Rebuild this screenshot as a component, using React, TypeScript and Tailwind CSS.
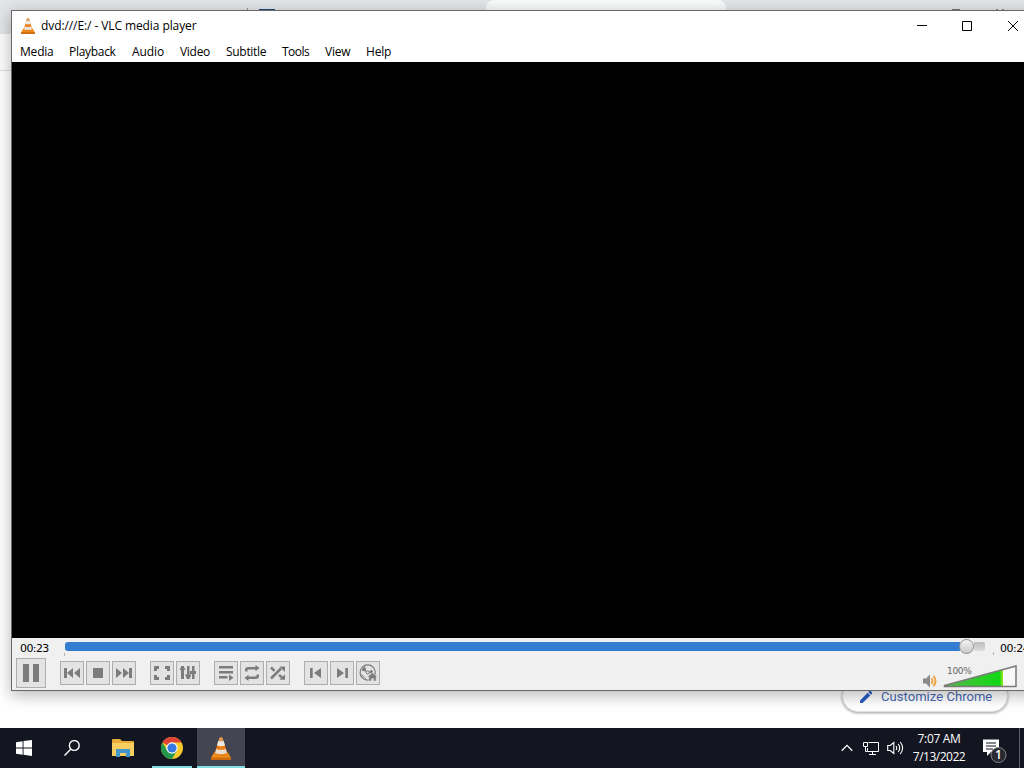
import type { ReactNode } from "react";
import { clsx } from "clsx";

const menus = [
    { name: "Media", className: "w-[33px] tracking-[-0.2px]" },
    { name: "Playback", className: "w-[47px] tracking-[-0.3px]" },
    { name: "Audio", className: "w-8 tracking-[-0.1px]" },
    { name: "Video", className: "w-[30px] tracking-[-0.3px]" },
    { name: "Subtitle", className: "w-10 tracking-[-0.3px]" },
    { name: "Tools", className: "w-[27px] tracking-[-0.5px]" },
    { name: "View", className: "w-[25px] tracking-[-0.2px]" },
    { name: "Help", className: "w-[25px] tracking-[-0.2px]" },
];

function Cone({ className }: { className?: string }) {
    return (
        <svg viewBox="0 0 20 23" className={className}>
            <path d="M3 15.5h14l3 5.5v1a1 1 0 0 1-1 1H1a1 1 0 0 1-1-1v-1z" fill="#f08c1e" />
            <path d="M0 20.5h20V22a1 1 0 0 1-1 1H1a1 1 0 0 1-1-1z" fill="#cd6a0c" />
            <path d="M8.5 1Q10-.3 11.5 1L16.6 17Q10 20.8 3.4 17z" fill="#ea7c12" />
            <path d="M7.2 4h5.6l1.2 4.5q-4 1.4-8 0z" fill="#eceae6" />
            <path d="M5.3 12q4.7 1.7 9.4 0l1.3 4q-6 2.6-12 0z" fill="#e9ddd2" />
            <path d="M8.5 1Q10-.3 11.5 1l1 3q-2.5.8-5 0z" fill="#dc9a5c" />
        </svg>
    );
}

function ToolButton({ children, large }: { children: ReactNode; large?: boolean }) {
    return (
        <button
            className={clsx(
                "flex shrink-0 items-center justify-center border border-[#adadad] bg-[#e3e3e3]",
                large ? "size-[30px]" : "size-6"
            )}
        >
            <svg
                viewBox={large ? "0 0 28 28" : "0 0 22 22"}
                className={large ? "size-7" : "size-[22px]"}
                fill="#7c7c7c"
                stroke="none"
            >
                {children}
            </svg>
        </button>
    );
}

function Browser() {
    return (
        <div className="flex h-[728px] flex-col bg-white">
            <div className="flex h-[34px] items-start bg-[#e2e4e7]">
                <div className="h-full w-[247px]" />
                <div className="mt-2 h-4 w-px bg-[#8d9299]" />
                <div className="mt-[9px] ml-[11px] h-4 w-4 bg-[#1f4f7d]" />
                <div className="ml-[211px] flex h-full w-[240px] rounded-t-lg bg-[#f8faf9]">
                    <div className="mt-[10px] ml-[18px] h-3 w-1.5 bg-[#444]" />
                </div>
                <div className="mt-[9px] ml-[226px] h-px w-2 bg-[#777]" />
                <div className="mt-[9px] ml-9 flex gap-1">
                    <div className="h-px w-0.5 bg-[#888]" />
                    <div className="h-px w-0.5 bg-[#888]" />
                </div>
            </div>
            <div className="h-[37px] border-b border-[#dcdcdc] bg-[#fbfcfb]" />
            <div className="flex grow items-end justify-end pr-4 pb-4">
                <div className="flex h-8 w-[166px] items-center rounded-full border border-[#e2e2e2] bg-white pt-0.5 pl-4 shadow-[0_1px_3px_rgba(0,0,0,0.4)]">
                    <svg viewBox="0 0 14 14" className="size-3.5 shrink-0" fill="#285fc4">
                        <path d="M1 10.5 8.7 2.8l2.6 2.6L3.6 13H1zM9.4 2.1l1-1q.7-.6 1.3 0L13 2.4q.6.6 0 1.3l-1 1z" />
                    </svg>
                    <span className="ml-2 font-['Roboto',sans-serif] text-[13px] leading-4 tracking-[0.05px] whitespace-nowrap text-[#4668b4]">
                        Customize Chrome
                    </span>
                </div>
            </div>
        </div>
    );
}

function TitleBar() {
    return (
        <div className="flex h-[30px] shrink-0 items-center pl-[9px]">
            <Cone className="h-4 w-3.5" />
            <span className="ml-1.5 w-[876px] shrink-0 text-[12px] leading-4 tracking-[-0.09px] whitespace-nowrap">
                dvd:///E:/ - VLC media player
            </span>
            <svg viewBox="0 0 102 12" className="h-3 w-[102px] shrink-0" fill="none" stroke="#000">
                <path d="M0 5.5h10M45.5 1.5h9v9h-9zM91 1l10 10M101 1 91 11" />
            </svg>
        </div>
    );
}

function MenuBar() {
    return (
        <div className="flex h-[21px] shrink-0 gap-4 pl-2">
            {menus.map((menu) => (
                <span key={menu.name} className={clsx("text-[12px] leading-[21px] whitespace-nowrap", menu.className)}>
                    {menu.name}
                </span>
            ))}
        </div>
    );
}

function SeekRow() {
    return (
        <div className="flex h-[19px] shrink-0 items-start pl-2">
            <span className="w-9 pt-1 font-['DejaVu_Sans',sans-serif] text-[11px] leading-[14px] tracking-[-0.6px]">00:23</span>
            <div className="mt-[15px] ml-2 h-[3px] w-px bg-[#b5b5b5]" />
            <div className="flex h-4 w-[920px] items-center">
                <div className="h-[9px] w-[895px] shrink-0 rounded-l-[3px] bg-[#307dd2]" />
                <div className="-ml-px size-[15px] shrink-0 rounded-full border border-[#8f8f8f] bg-linear-to-b from-[#f5f5f5] to-[#c9c9c9]" />
                <div className="h-[9px] grow rounded-r-[2px] bg-linear-to-b from-[#bcbcbc] to-[#dddddd]" />
            </div>
            <div className="mt-[14px] ml-2 h-[3px] w-px bg-[#b5b5b5]" />
            <span className="ml-1.5 pt-1 font-['DejaVu_Sans',sans-serif] text-[11px] leading-[14px] tracking-[-0.5px] whitespace-nowrap">
                00:24
            </span>
        </div>
    );
}

function Controls() {
    return (
        <div className="flex h-[33px] shrink-0 items-start pl-1">
            <div className="mt-px">
                <ToolButton large>
                    <path d="M6 5h6v18H6zM16 5h6v18h-6z" />
                </ToolButton>
            </div>
            <div className="mt-1 ml-3.5 flex gap-0.5">
                <ToolButton>
                    <path d="M3 6h3v10H3zM12 6v10l-6-5zM19 6v10l-6-5z" />
                </ToolButton>
                <ToolButton>
                    <path d="M6 6h10v10H6z" />
                </ToolButton>
                <ToolButton>
                    <path d="M3 6v10l6-5zM10 6v10l6-5zM16 6h3v10h-3z" />
                </ToolButton>
            </div>
            <div className="mt-1 ml-3.5 flex gap-0.5">
                <ToolButton>
                    <path d="M3 4h5v3H6v2H3zM14 4h5v5h-3V7h-2zM3 13h3v2h2v3H3zM16 13h3v5h-5v-3h2z" />
                </ToolButton>
                <ToolButton>
                    <path d="M4 4h3v13H4zM10 4h2.5v13H10zM15 4h2.5v13H15zM2.5 8l2-4h2l2 4zM8 12.5h6.500L12.500 17H10zM13 9h6v3h-6z" />
                </ToolButton>
            </div>
            <div className="mt-1 ml-3.5 flex gap-0.5">
                <ToolButton>
                    <path d="M4 4h14v2.5H4zM4 9h14v2.5H4zM4 14h8.5v2.500H4zM14 12.5l4.5 3.2-4.5 3.2z" />
                </ToolButton>
                <ToolButton>
                    <path d="M4 9.5V8q0-3 3-3h7.500V3l4 3.1-4 3.1V7.500H7.500q-1 0-1 1v1zM18 12.5V14q0 3-3 3H7.500v2l-4-3.1 4-3.100v1.700h7q1 0 1-1v-1z" />
                </ToolButton>
                <ToolButton>
                    <path
                        d="M4 16.5 14 6.5M4 5.5l3.5 3.3M12 12.8l3.5 3.2"
                        fill="none"
                        stroke="#7c7c7c"
                        strokeWidth="2.5"
                    />
                    <path d="M12.5 4.5H18V10zM18 12.3v5.5h-5.500z" />
                </ToolButton>
            </div>
            <div className="mt-1 ml-3.5 flex gap-0.5">
                <ToolButton>
                    <path d="M5 6h2.7v10H5zM16 6v10l-7-5z" />
                </ToolButton>
                <ToolButton>
                    <path d="M6 6v10l7-5zM14.3 6H17v10h-2.7z" />
                </ToolButton>
                <ToolButton>
                    <circle cx="10.7" cy="10.5" r="7.6" fill="none" stroke="#777" strokeWidth="1.2" />
                    <path d="M9.5 9.8 4.5 8.5q.8-3 3.6-4.300zM12 10l2.5-2.5 1.8 2.8-3.500 1.200z" />
                    <circle cx="10.7" cy="10.5" r="1.5" fill="#e3e3e3" stroke="#777" />
                    <path d="M5 12.5q1 3 3.8 4" fill="none" stroke="#8a8a8a" />
                    <path d="m15.3 10.5 5 4.6h-1.200V19h-2.600v-2.500h-2V19h-2.600v-3.900h-1.500z" stroke="#e3e3e3" strokeWidth=".5" />
                </ToolButton>
            </div>
            <svg viewBox="0 0 16 16" className="mt-4 ml-[542px] size-4 shrink-0" fill="none">
                <path d="M1 5.5h3l4-4v13l-4-4H1z" fill="#8a8a8a" />
                <path d="M9.5 5.2q2 2.8 0 5.6M11.5 2.7q4 5.3 0 10.6" stroke="#f0a03c" strokeWidth="1.9" />
            </svg>
            <div className="ml-[5px] flex h-8 w-[75px] shrink-0 flex-col">
                <div className="h-2">
                    <span className="relative top-2 left-1 block font-['DejaVu_Sans',sans-serif] text-[9px] leading-3 tracking-[-0.3px] text-[#666]">
                        100%
                    </span>
                </div>
                <svg viewBox="0 0 75 23" className="h-[23px] w-[75px]">
                    <defs>
                        <linearGradient id="volume">
                            <stop offset="0" stopColor="#54b74c" />
                            <stop offset=".65" stopColor="#28cf24" />
                            <stop offset=".94" stopColor="#10d816" />
                            <stop offset="1" stopColor="#9de819" />
                        </linearGradient>
                    </defs>
                    <path d="M1.5 20.5 73 1v20.5H1.5z" fill="#f8f8f8" />
                    <path d="M1.5 20.5 60 4.8v16.7H1.5z" fill="url(#volume)" />
                    <path d="M1.5 20.5 73 1v20.5H1.5z" fill="none" stroke="#7a7a7a" strokeWidth="1.5" />
                </svg>
            </div>
        </div>
    );
}

function PlayerWindow() {
    return (
        <div className="absolute top-[10px] left-[11px] flex h-[681px] w-[1060px] flex-col border border-[#686868] bg-white shadow-[0_4px_14px_1px_rgba(0,0,0,0.26)]">
            <TitleBar />
            <MenuBar />
            <div className="h-[576px] shrink-0 bg-black" />
            <div className="flex grow flex-col bg-[#f0f0f0]">
                <SeekRow />
                <Controls />
            </div>
        </div>
    );
}

function Taskbar() {
    return (
        <div className="relative flex h-10 items-stretch bg-[#131521] text-white">
            <div className="flex w-12 items-center justify-center">
                <svg viewBox="0 0 16 16" className="size-4" fill="#fff">
                    <path d="m0 2.3 6.6-1v6.2H0zM7.5 1.1 16 0v7.5H7.5zM0 8.4h6.6v6.3L0 13.8zM7.5 8.4H16V16l-8.500-1.200z" />
                </svg>
            </div>
            <div className="flex w-12 items-center justify-center">
                <svg viewBox="0 0 16 16" className="size-4" fill="none" stroke="#fff" strokeWidth="1.4">
                    <circle cx="10.3" cy="5.5" r="4.9" />
                    <path d="m6.7 9.2-6.2 6.3" />
                </svg>
            </div>
            <div className="flex w-14 items-center justify-center pr-0.5">
                <svg viewBox="0 0 22 18" className="h-[18px] w-[22px]">
                    <path d="M0 1q0-1 1-1h7l2 2h11q1 0 1 1v14H0z" fill="#e8ad37" />
                    <path d="M0 4h22v13H0z" fill="#f6cd5f" />
                    <path d="M4 10h14v8h-4v-4H8v4H4z" fill="#3f97cb" />
                </svg>
            </div>
            <div className="flex w-10 flex-col items-center border-b-2 border-[#86dce5] pt-[9px]">
                <svg viewBox="0 0 24 24" className="size-[22px]">
                    <circle cx="12" cy="12" r="12" fill="#f6c92c" />
                    <path d="M12 12 1.6 6A12 12 0 0 1 22.4 6H12z" fill="#df4437" />
                    <path d="M1.6 6A12 12 0 0 0 12 24l5.2-9L12 12 6.8 15z" fill="#249850" />
                    <circle cx="12" cy="12" r="6.2" fill="#fff" />
                    <circle cx="12" cy="12" r="5" fill="#3978e2" />
                </svg>
            </div>
            <div className="ml-[5px] flex w-12 flex-col items-center border-b-2 border-[#86dce5] bg-[#434550] pt-[9px]">
                <Cone className="h-[23px] w-5" />
            </div>
            <div className="ml-auto flex items-center">
                <svg viewBox="0 0 12 8" className="h-2 w-3" fill="none" stroke="#fff" strokeWidth="1.3">
                    <path d="m.7 6.7 5.3-5.3 5.3 5.3" />
                </svg>
                <svg viewBox="0 0 17 16" className="ml-[9px] h-4 w-[17px]" fill="none" stroke="#fff">
                    <path d="M6.5 2.5h10v9h-11V8M10.5 11.5v3M7 14.5h7M1.5 2.5h4v4h-4zM3.5 6.5v5h2" />
                </svg>
                <svg viewBox="0 0 17 16" className="ml-2 h-4 w-[17px]" fill="none" stroke="#fff" strokeWidth="1.1">
                    <path d="M.7 5.5h2.6l3.500-3v11l-3.500-3H.7zM9 6q1.5 2 0 4M11.2 4q3 4 0 8M13.3 2q4.6 6 0 12" />
                </svg>
                <div className="ml-[7px] flex w-14 flex-col items-center text-[12px] leading-[18px] whitespace-nowrap">
                    <span className="tracking-[-0.35px]">7:07 AM</span>
                    <span className="tracking-[-0.5px]">7/13/2022</span>
                </div>
                <div className="relative ml-4 size-6">
                    <svg viewBox="0 0 24 24" className="size-6 overflow-visible">
                        <path d="M0 3.5h16V16H8l-4 4v-4H0z" fill="#fff" />
                        <path d="M3 7h10M3 10h10M3 13h7" stroke="#131521" />
                        <circle cx="15.5" cy="19" r="7.5" fill="#292a31" stroke="#85868b" />
                    </svg>
                    <span className="absolute top-[11px] left-[12px] text-[12px] leading-4 font-semibold">1</span>
                </div>
                <div className="ml-3 h-10 w-px bg-[#5c5d66]" />
                <div className="w-1" />
            </div>
        </div>
    );
}

export default function App() {
    return (
        <div className="relative h-[768px] w-[1024px] overflow-hidden bg-white font-['Open_Sans','Noto_Sans',sans-serif] text-black">
            <Browser />
            <PlayerWindow />
            <Taskbar />
        </div>
    );
}
